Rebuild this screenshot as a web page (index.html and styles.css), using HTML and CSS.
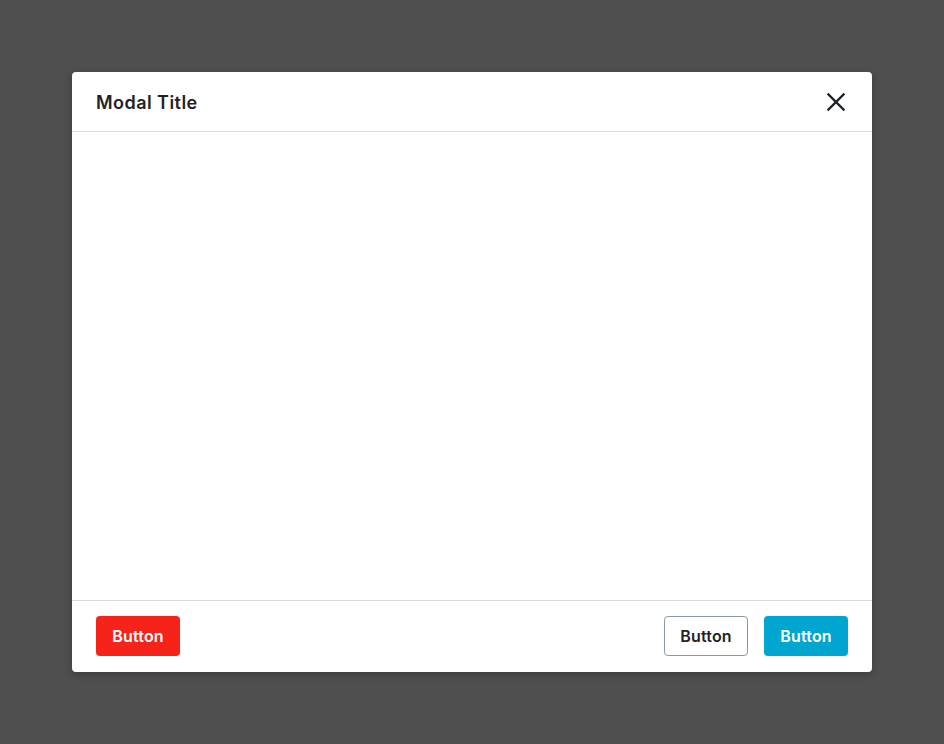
FILE: index.html
```html
<!DOCTYPE html>
<html lang="en">
<head>
<meta charset="utf-8">
<title>Modal</title>
<link rel="stylesheet" href="styles.css">
</head>
<body>
<div class="overlay">
  <div class="modal">
    <div class="modal-header">
      <h2 class="modal-title">Modal Title</h2>
      <button class="close" aria-label="Close">
        <svg width="24" height="24" viewBox="0 0 24 24" fill="none" stroke="#1f2326" stroke-width="2.2" stroke-linecap="butt">
          <path d="M3.6 3.6 L20.4 20.4 M20.4 3.6 L3.6 20.4"/>
        </svg>
      </button>
    </div>
    <div class="modal-body"></div>
    <div class="modal-footer">
      <button class="btn btn-danger">Button</button>
      <div class="footer-right">
        <button class="btn btn-outline">Button</button>
        <button class="btn btn-primary">Button</button>
      </div>
    </div>
  </div>
</div>
</body>
</html>
```
FILE: styles.css
```css
html, body {
  margin: 0;
  padding: 0;
  height: 100%;
}
body {
  background: #4f4f4f;
  font-family: Inter, "Liberation Sans", sans-serif;
}
.overlay {
  display: flex;
  justify-content: center;
  padding-top: 72px;
}
.modal {
  width: 800px;
  height: 600px;
  background: #fff;
  border-radius: 4px;
  display: flex;
  flex-direction: column;
  box-shadow: 0 2px 8px rgba(0,0,0,0.25);
}
.modal-header {
  height: 59px;
  border-bottom: 1px solid #dcdcdc;
  display: flex;
  align-items: center;
  justify-content: space-between;
  padding: 0 24px;
}
.modal-title {
  margin: 0;
  font-size: 18px;
  font-weight: 600;
  letter-spacing: 0.45px;
  color: #1f2326;
  padding-top: 1px;
}
.close {
  border: 0;
  background: none;
  padding: 0;
  width: 24px;
  height: 24px;
  cursor: pointer;
  display: flex;
}
.modal-body {
  flex: 1;
}
.modal-footer {
  box-sizing: border-box;
  height: 72px;
  border-top: 1px solid #dcdcdc;
  display: flex;
  align-items: flex-start;
  justify-content: space-between;
  padding: 15px 24px 16px;
}
.footer-right {
  display: flex;
  gap: 16px;
}
.btn {
  height: 40px;
  width: 84px;
  border-radius: 4px;
  font-family: Inter, "Liberation Sans", sans-serif;
  font-size: 16px;
  font-weight: 600;
  letter-spacing: 0.2px;
  border: 1px solid transparent;
  padding: 0;
  cursor: pointer;
}
.btn-danger {
  background: #f5231a;
  color: #fff;
}
.btn-outline {
  background: #fff;
  border-color: #8a9aa4;
  color: #1f2326;
}
.btn-primary {
  background: #00a6d0;
  color: #fff;
}
```
